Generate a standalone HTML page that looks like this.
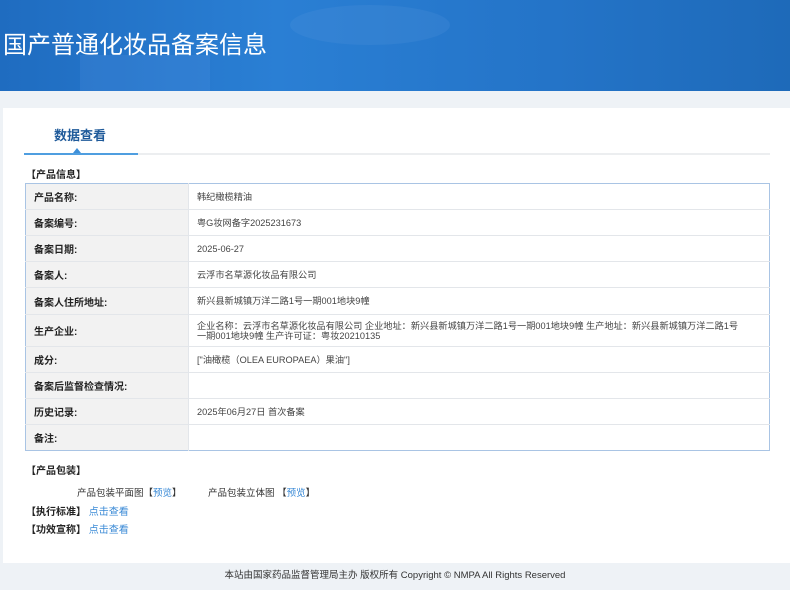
<!DOCTYPE html>
<html><head><meta charset="utf-8"><style>
*{margin:0;padding:0;box-sizing:border-box}
body{width:790px;height:590px;overflow:hidden;background:#eef2f6;font-family:"Liberation Sans","Noto Sans CJK SC",sans-serif;color:#333;position:relative}
.hd{position:absolute;left:0;top:0;width:790px;height:91px;background:linear-gradient(90deg,#1f6cc0 0%,#2a7fd4 35%,#2474c8 70%,#1e6ab9 100%);overflow:hidden}
.hd .b1{position:absolute;left:80px;top:55px;width:130px;height:60px;background:rgba(90,150,230,.2)}
.hd .b2{position:absolute;left:290px;top:5px;width:160px;height:40px;border-radius:50%;background:rgba(120,170,230,.12)}
.hd h1{position:absolute;left:3px;top:27px;font-size:24px;font-weight:normal;color:#fff;font-family:"Noto Sans CJK SC",sans-serif;line-height:32px}
.pn{position:absolute;left:3px;top:108px;width:787px;height:455px;background:#fff}
.tab{position:absolute;left:54px;top:125px;font-size:13px;color:#1f5a9a;font-weight:bold}
.ln{position:absolute;left:24px;top:153px;width:746px;height:2px;background:#eceef0}
.ln2{position:absolute;left:24px;top:153px;width:114px;height:2px;background:#4f9ee0}
.tri{position:absolute;left:73px;top:148px;width:0;height:0;border-left:4px solid transparent;border-right:4px solid transparent;border-bottom:5px solid #3d8fd8}
.sec{position:absolute;font-size:10px;font-weight:bold;color:#222;line-height:12px}
table{position:absolute;left:25px;top:183px;width:745px;border-collapse:collapse;border:1px solid #a9c4e4;font-size:9.2px}
td{border-bottom:1px solid #e3e6ea;height:26px;vertical-align:middle}
td.l{width:163px;background:#f2f2f2;font-weight:bold;padding-left:8px;font-size:10px;color:#222;border-right:1px solid #e3e6ea}
td.v{padding-left:8px;padding-right:22px;color:#444;line-height:10px}
.t{position:absolute;font-size:9.5px;color:#333}
a{color:#3a8ad6;text-decoration:none}
.ft{position:absolute;left:0;top:567px;width:790px;text-align:center;font-size:9.5px;color:#333}
</style></head><body>
<div class="hd"><div class="b1"></div><div class="b2"></div><h1>国产普通化妆品备案信息</h1></div>
<div class="pn"></div>
<div class="tab">数据查看</div>
<div class="ln"></div><div class="ln2"></div><div class="tri"></div>
<div class="sec" style="left:26px;top:170px">【产品信息】</div>
<table>
<tr><td class="l">产品名称:</td><td class="v">韩纪橄榄精油</td></tr>
<tr><td class="l">备案编号:</td><td class="v">粤G妆网备字2025231673</td></tr>
<tr><td class="l">备案日期:</td><td class="v">2025-06-27</td></tr>
<tr><td class="l">备案人:</td><td class="v">云浮市名草源化妆品有限公司</td></tr>
<tr><td class="l" style="height:27px">备案人住所地址:</td><td class="v">新兴县新城镇万洋二路1号一期001地块9幢</td></tr>
<tr><td class="l" style="height:32px">生产企业:</td><td class="v">企业名称：云浮市名草源化妆品有限公司 企业地址：新兴县新城镇万洋二路1号一期001地块9幢 生产地址：新兴县新城镇万洋二路1号一期001地块9幢 生产许可证：粤妆20210135</td></tr>
<tr><td class="l">成分:</td><td class="v">["油橄榄（OLEA EUROPAEA）果油"]</td></tr>
<tr><td class="l">备案后监督检查情况:</td><td class="v"></td></tr>
<tr><td class="l">历史记录:</td><td class="v">2025年06月27日 首次备案</td></tr>
<tr><td class="l" style="border-bottom:none">备注:</td><td class="v" style="border-bottom:none"></td></tr>
</table>
<div class="sec" style="left:26px;top:466px">【产品包装】</div>
<div class="t" style="left:77px;top:485px">产品包装平面图【<a>预览</a>】</div>
<div class="t" style="left:208px;top:485px">产品包装立体图 【<a>预览</a>】</div>
<div class="sec" style="left:26px;top:507px">【执行标准】 <a style="font-weight:normal">点击查看</a></div>
<div class="sec" style="left:26px;top:525px">【功效宣称】 <a style="font-weight:normal">点击查看</a></div>
<div class="ft">本站由国家药品监督管理局主办 版权所有 Copyright © NMPA All Rights Reserved</div>
</body></html>
